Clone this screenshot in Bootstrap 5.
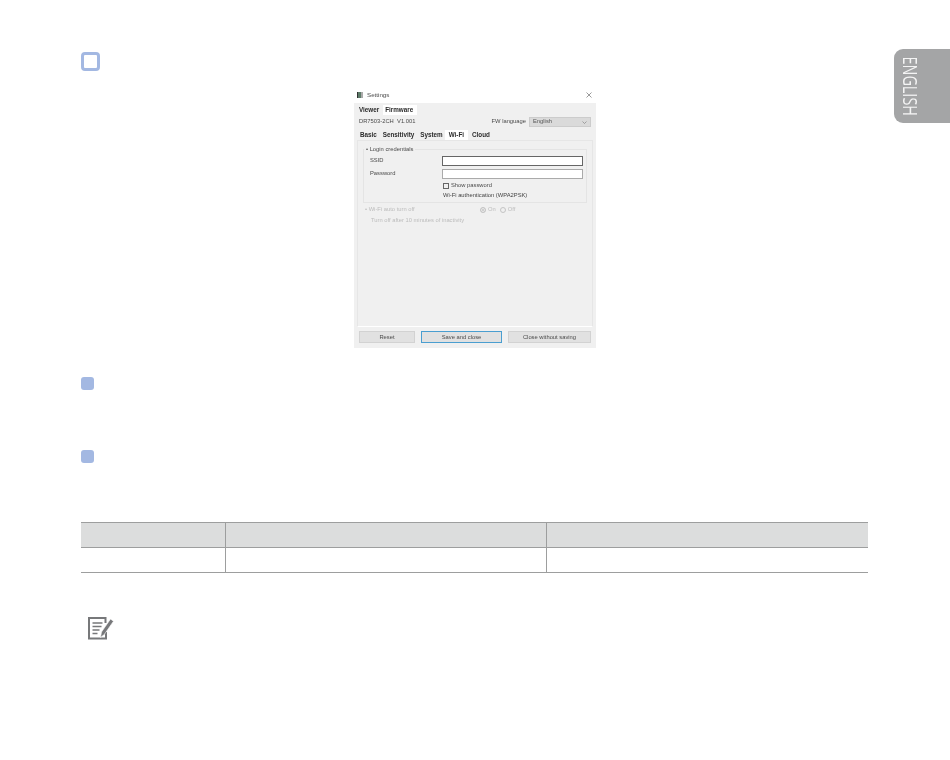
<!DOCTYPE html>
<html lang="en">
<head>
  <meta charset="UTF-8">
  <title>Wi-Fi settings</title>
  <link href="https://cdn.jsdelivr.net/npm/bootstrap@5.3.0/dist/css/bootstrap.min.css" rel="stylesheet">
  <style>
    body { background: #fff; font-family: "Liberation Sans", sans-serif; }
    .manual-page { width: 950px; height: 760px; padding: 52px 82px 0 81px; position: relative; overflow: hidden; }
    .lang-tab { position: absolute; left: 894px; top: 49px; width: 56px; height: 74px; padding-right: 25px; background: #a4a5a6; border-radius: 9px 0 0 9px; color: #f4f4f4; font-family: "Open Sans", sans-serif; font-size: 20px; display: flex; align-items: center; justify-content: center; }
    .lang-text { writing-mode: vertical-rl; transform: scaleY(.72); }
    .step-ring { width: 19px; height: 19px; border: 3px solid #a3b8e2; border-radius: 4px; }
    .step-dot { width: 13px; height: 13px; background: #a3b8e2; border-radius: 3px; }
    .step-two { margin-top: 29px; }
    .step-three { margin-top: 60px; }

    .dialog { width: 242px; height: 261px; margin: 16px 0 0 273px; font-size: 5.8px; color: #4a4a4a; line-height: 1; filter: blur(.35px); }
    .dlg-title { height: 16px; padding: 0 4px 0 3px; font-size: 6.2px; }
    .dlg-icon { width: 6px; height: 6px; background: #5c7a68; border-left: 1px solid #333; border-right: 2px solid #aaa; }
    .dlg-body { height: 245px; background: #f0f0f0; }
    .dlg-tabs { height: 12px; padding: 2px 0 0 3px; font-weight: 700; font-size: 6.3px; color: #2a2a2a; }
    .dlg-tabs-inner { height: 11px; padding: 1px 0 0 4px; gap: 2px; }
    .dlg-tab { padding: 0 2px; }
    .dlg-tab-on { background: #fff; height: 100%; display: flex; align-items: center; }
    .dlg-tab-fw { margin-left: 2px; padding-right: 4px; }
    .dlg-tab-wifi { margin-left: -2px; padding: 0 4px; }
    .dlg-info { height: 14px; padding: 0 5px; }
    .dlg-select { width: 62px; height: 10px; margin-left: 3px; padding: 0 3px; background: #dadada; border: 1px solid #ccc; color: #555; }
    .dlg-panel { height: 187px; margin: 0 3px; padding: 8px 5px 0; background: #f0f0f0; border: 1px solid #e6e6e6; border-bottom-color: #fff; }
    .dlg-group { height: 54px; padding: 4px 3px 0 7px; border: 1px solid #e4e4e4; position: relative; }
    .dlg-legend { position: absolute; left: 0; top: -3px; padding: 0 2px; background: #f0f0f0; }
    .dlg-row { height: 13px; }
    .dlg-row-short { height: 11px; }
    .dlg-label { width: 72px; margin-left: -1px; margin-right: 1px; }
    .dlg-input { width: 141px; height: 10px; min-height: 0; padding: 0; border-radius: 0; border: 1px solid #aaa; }
    .dlg-input-dark { border-color: #666; }
    .dlg-check { width: 6px; height: 6px; border: 1px solid #666; margin-right: 2px; }
    .dlg-auth { margin: 2px 0 0 72px; color: #444; }
    .dlg-off { color: #bcbcbc; padding: 4px 0 0 2px; }
    .dlg-off-head { width: 115px; }
    .dlg-off-note { margin-top: 5px; padding-left: 6px; }
    .dlg-radio { width: 6px; height: 6px; border: 1px solid #c4c4c4; border-radius: 50%; margin-right: 2px; }
    .dlg-radio-on { background: #c4c4c4; box-shadow: inset 0 0 0 1px #f0f0f0; }
    .dlg-foot { height: 16px; margin-top: 2px; padding: 0 5px; gap: 6px; }
    .dlg-btn { height: 12px; padding: 1px 0 0; font-size: 5.8px; line-height: 1; color: #4a4a4a; background: #e1e1e1; border: 1px solid #d2d2d2; border-radius: 0; }
    .dlg-btn-main { border: 1px solid #4a9ed0; }
    .dlg-btn-reset { width: 56px; }
    .dlg-btn-save { width: 81px; }
    .dlg-btn-close { width: 83px; }

    .spec-table { width: 787px; margin: 59px 0 0; table-layout: fixed; border-color: #9d9e9e; }
    .spec-table th, .spec-table td { height: 25px; padding: 0; border-bottom: 1px solid #9d9e9e; box-shadow: none; }
    .spec-table thead th { background: #dcdddd; border-top: 1px solid #9d9e9e; }
    .spec-table th + th, .spec-table td + td { border-left: 1px solid #9d9e9e; }
    .spec-col-a { width: 144px; }
    .spec-col-b { width: 321px; }
    .note-icon { display: block; margin: 44px 0 0 7px; }
  </style>
</head>
<body>
  <div class="manual-page">
    <div class="lang-tab"><span class="lang-text">ENGLISH</span></div>

    <div class="step-ring"></div>

    <div class="dialog">
      <div class="dlg-title d-flex align-items-center">
        <span class="dlg-icon me-1"></span>
        <span class="flex-grow-1">Settings</span>
        <svg width="6" height="6" viewBox="0 0 6 6"><path d="M.5.5l5 5M5.500.5l-5 5" stroke="#555" stroke-width=".6"/></svg>
      </div>
      <div class="dlg-body">
        <div class="dlg-tabs d-flex align-items-center">
          <span class="dlg-tab">Viewer</span>
          <span class="dlg-tab dlg-tab-on dlg-tab-fw">Firmware</span>
        </div>
        <div class="dlg-info d-flex align-items-center">
          <span class="flex-grow-1">DR7503-2CH&nbsp; V1.001</span>
          <span>FW language</span>
          <span class="dlg-select d-flex align-items-center justify-content-between">English
            <svg width="5" height="3" viewBox="0 0 5 3"><path d="M.5.500l2 2 2-2" fill="none" stroke="#777" stroke-width=".6"/></svg>
          </span>
        </div>
        <div class="dlg-tabs dlg-tabs-inner d-flex align-items-center">
          <span class="dlg-tab">Basic</span>
          <span class="dlg-tab">Sensitivity</span>
          <span class="dlg-tab">System</span>
          <span class="dlg-tab dlg-tab-on dlg-tab-wifi">Wi-Fi</span>
          <span class="dlg-tab">Cloud</span>
        </div>
        <div class="dlg-panel">
          <div class="dlg-group">
            <span class="dlg-legend">• Login credentials</span>
            <div class="dlg-row d-flex align-items-center">
              <span class="dlg-label">SSID</span>
              <input type="text" class="form-control dlg-input dlg-input-dark">
            </div>
            <div class="dlg-row d-flex align-items-center">
              <span class="dlg-label">Password</span>
              <input type="text" class="form-control dlg-input">
            </div>
            <div class="d-flex align-items-center dlg-row-short">
              <span class="dlg-label"></span>
              <span class="dlg-check"></span>Show password
            </div>
            <div class="dlg-auth">Wi-Fi authentication (WPA2PSK)</div>
          </div>
          <div class="dlg-off">
            <div class="d-flex align-items-center">
              <span class="dlg-off-head">• Wi-Fi auto turn off</span>
              <span class="dlg-radio dlg-radio-on"></span>On
              <span class="dlg-radio ms-1"></span>Off
            </div>
            <div class="dlg-off-note">Turn off after 10 minutes of inactivity</div>
          </div>
        </div>
        <div class="dlg-foot d-flex align-items-center">
          <button type="button" class="btn dlg-btn dlg-btn-reset">Reset</button>
          <button type="button" class="btn dlg-btn dlg-btn-main dlg-btn-save">Save and close</button>
          <button type="button" class="btn dlg-btn dlg-btn-close">Close without saving</button>
        </div>
      </div>
    </div>

    <div class="step-dot step-two"></div>
    <div class="step-dot step-three"></div>

    <table class="table spec-table">
      <colgroup><col class="spec-col-a"><col class="spec-col-b"><col></colgroup>
      <thead><tr><th></th><th></th><th></th></tr></thead>
      <tbody><tr><td></td><td></td><td></td></tr></tbody>
    </table>

    <svg class="note-icon" width="26" height="23" viewBox="0 0 26 23">
      <path d="M17.500 6V1H1v20.500h17V15" fill="none" stroke="#77787a" stroke-width="2"/>
      <path d="M4.500 6h10M4.500 9.500h9M4.500 13h7M4.500 16.500h5" stroke="#77787a" stroke-width="1.400"/>
      <path d="M12.500 20.500l1-5.500L22.500 2l3 2.200-9 13z" fill="#77787a" stroke="#fff" stroke-width=".6"/>
    </svg>
  </div>
</body>
</html>
